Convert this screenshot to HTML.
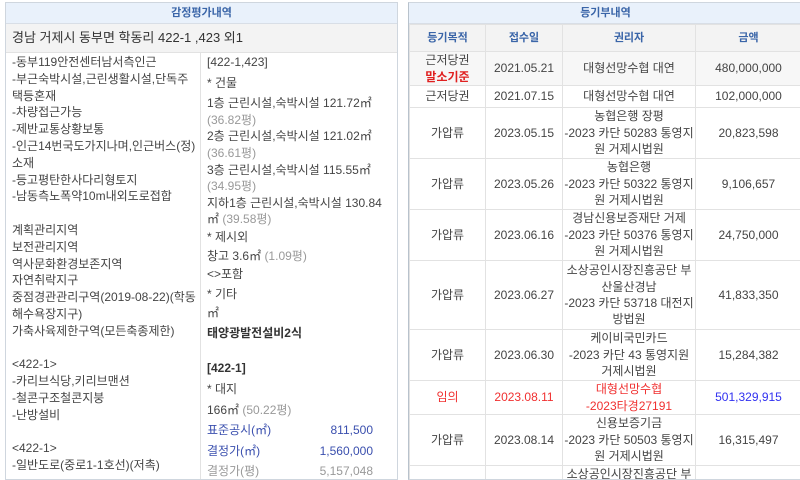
<!DOCTYPE html>
<html><head><meta charset="utf-8"><style>
body{margin:0;width:800px;height:480px;overflow:hidden;background:#fff;font-family:"Liberation Sans","Noto Sans CJK KR",sans-serif;font-size:12px;color:#444;}
.p{position:absolute;top:2px;border:1px solid #cfd6de;box-sizing:border-box;height:478px;overflow:hidden}
.tt{height:20px;line-height:20px;text-align:center;background:#e9f1fb;color:#3a65a8;font-size:11px;font-weight:bold;border-bottom:1px solid #d8dee6}
table{border-collapse:collapse;width:100%;table-layout:fixed}
td{border:1px solid #e2e2e2;vertical-align:top;white-space:nowrap;overflow:hidden}
.l{line-height:16.8px;white-space:nowrap}
.g{color:#999}
.b{color:#3a4fae}
.r td{text-align:center;vertical-align:middle;line-height:16.4px;padding:0}
</style></head><body>
<div class="p" style="left:5px;width:393px">
<div class="tt">감정평가내역</div>
<div style="height:28px;line-height:28px;background:#f3f3f3;padding-left:6px;font-size:13px;color:#333;border-bottom:1px solid #e2e2e2">경남 거제시 동부면 학동리 422-1 ,423 외1</div>
<div style="display:flex">
<div class="l" style="width:188px;padding:1px 0 0 6px;border-right:1px solid #e2e2e2;height:440px;overflow:hidden">-동부119안전센터남서측인근<br>-부근숙박시설,근린생활시설,단독주<br>택등혼재<br>-차량접근가능<br>-제반교통상황보통<br>-인근14번국도가지나며,인근버스(정)<br>소재<br>-등고평탄한사다리형토지<br>-남동측노폭약10m내외도로접합<br><br>계획관리지역<br>보전관리지역<br>역사문화환경보존지역<br>자연취락지구<br>중점경관관리구역(2019-08-22)(학동<br>해수욕장지구)<br>가축사육제한구역(모든축종제한)<br><br>&lt;422-1&gt;<br>-카리브식당,키리브맨션<br>-철콘구조철콘지붕<br>-난방설비<br><br>&lt;422-1&gt;<br>-일반도로(중로1-1호선)(저촉)</div>
<div style="width:185px;padding:1px 0 0 6px;line-height:16.6px;white-space:nowrap">
<div style="margin-bottom:4px">[422-1,423]</div>
<div style="margin-bottom:4px">* 건물</div>
1층 근린시설,숙박시설 121.72㎡<br><span class="g">(36.82평)</span><br>
2층 근린시설,숙박시설 121.02㎡<br><span class="g">(36.61평)</span><br>
3층 근린시설,숙박시설 115.55㎡<br><span class="g">(34.95평)</span><br>
지하1층 근린시설,숙박시설 130.84<br>㎡ <span class="g">(39.58평)</span><br>
<div style="margin-top:1px">* 제시외</div>
<div style="margin-top:2px">창고 3.6㎡ <span class="g">(1.09평)</span></div>
<div style="margin-top:2px">&lt;&gt;포함</div>
<div style="margin-top:3px">* 기타</div>
<div style="margin-top:3px">㎡</div>
<div style="margin-top:3px;font-weight:bold;color:#333">태양광발전설비2식</div>
<div style="margin-top:18px;font-weight:bold;color:#333">[422-1]</div>
<div style="margin-top:5px">* 대지</div>
<div style="margin-top:4px">166㎡ <span class="g">(50.22평)</span></div>
<div style="margin-top:4px;display:flex;justify-content:space-between;width:166px" class="b"><span>표준공시(㎡)</span><span>811,500</span></div>
<div style="margin-top:4px;display:flex;justify-content:space-between;width:166px" class="b"><span>결정가(㎡)</span><span>1,560,000</span></div>
<div style="margin-top:4px;display:flex;justify-content:space-between;width:166px" class="g"><span>결정가(평)</span><span>5,157,048</span></div>
</div></div></div>
<div class="p" style="left:408px;width:395px;border-left-color:#b8c2cc">
<div class="tt">등기부내역</div>
<table>
<colgroup><col style="width:76px"><col style="width:77px"><col style="width:133px"><col></colgroup>
<tr class="r" style="height:27px;background:#f3f3f3"><td style="color:#3a65a8;font-weight:bold;font-size:11px">등기목적</td><td style="color:#3a65a8;font-weight:bold;font-size:11px">접수일</td><td style="color:#3a65a8;font-weight:bold;font-size:11px">권리자</td><td style="color:#3a65a8;font-weight:bold;font-size:11px">금액</td></tr>
<tr class="r" style="height:34px;background:#f7f7f7"><td>근저당권<br><span style="color:#e02020;font-weight:bold">말소기준</span></td><td>2021.05.21</td><td>대형선망수협 대연</td><td>480,000,000</td></tr>
<tr class="r" style="height:22px"><td>근저당권</td><td>2021.07.15</td><td>대형선망수협 대연</td><td>102,000,000</td></tr>
<tr class="r" style="height:51px"><td>가압류</td><td>2023.05.15</td><td>농협은행 장평<br>-2023 카단 50283 통영지<br>원 거제시법원</td><td>20,823,598</td></tr>
<tr class="r" style="height:51px"><td>가압류</td><td>2023.05.26</td><td>농협은행<br>-2023 카단 50322 통영지<br>원 거제시법원</td><td>9,106,657</td></tr>
<tr class="r" style="height:51px"><td>가압류</td><td>2023.06.16</td><td>경남신용보증재단 거제<br>-2023 카단 50376 통영지<br>원 거제시법원</td><td>24,750,000</td></tr>
<tr class="r" style="height:69px"><td>가압류</td><td>2023.06.27</td><td>소상공인시장진흥공단 부<br>산울산경남<br>-2023 카단 53718 대전지<br>방법원</td><td>41,833,350</td></tr>
<tr class="r" style="height:51px"><td>가압류</td><td>2023.06.30</td><td>케이비국민카드<br>-2023 카단 43 통영지원<br>거제시법원</td><td>15,284,382</td></tr>
<tr class="r" style="height:34px;color:#f03030"><td>임의</td><td>2023.08.11</td><td>대형선망수협<br>-2023타경27191</td><td style="color:#3030f0">501,329,915</td></tr>
<tr class="r" style="height:51px"><td>가압류</td><td>2023.08.14</td><td>신용보증기금<br>-2023 카단 50503 통영지<br>원 거제시법원</td><td>16,315,497</td></tr>
<tr class="r" style="height:51px"><td></td><td></td><td style="vertical-align:top">소상공인시장진흥공단 부</td><td></td></tr>
</table></div>
</body></html>
